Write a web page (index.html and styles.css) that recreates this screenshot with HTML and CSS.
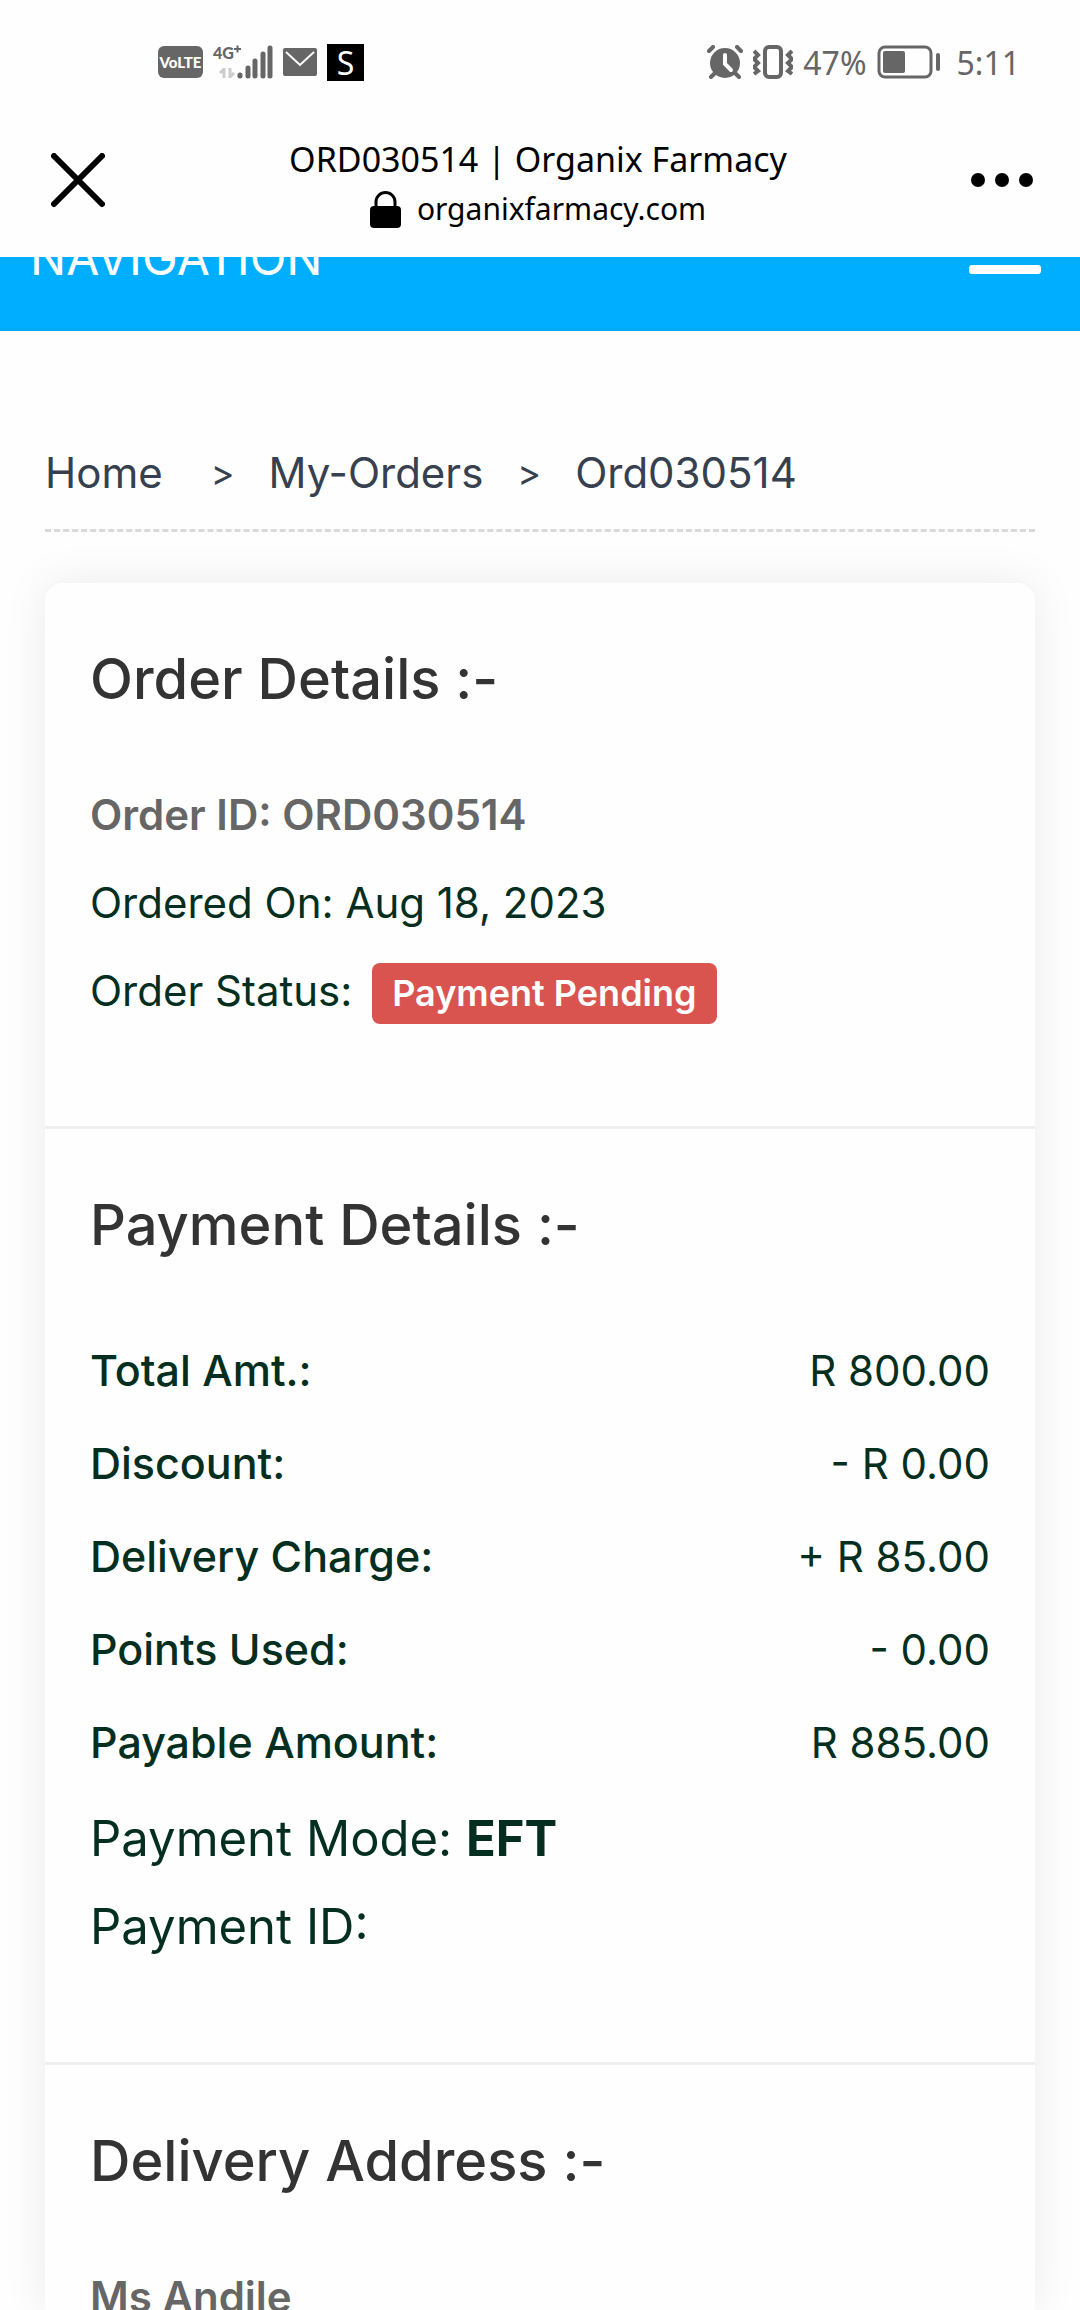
FILE: index.html
```
<!DOCTYPE html>
<html lang="en">
<head>
    <meta charset="UTF-8">
    <meta name="viewport" content="width=device-width, initial-scale=1.0">
    <title>ORD030514 | Organix Farmacy</title>
    <link rel="stylesheet" href="styles.css">
</head>
<body>
    <div class="status-bar">
        <div class="status-left">
            <span class="volte">VoLTE</span>
            <svg class="signal" width="60" height="36" viewBox="0 0 60 36">
                <text class="net" x="0" y="15">4G</text>
                <path d="M21 5h7M24.500 1.500v7" stroke="#666" stroke-width="2"/>
                <path d="M11 34V24M7 29l4-4M17 24v10M21 29l-4 4" stroke="#ccc" stroke-width="3" fill="none"/>
                <path d="M27 31v1M35 24v8M42 17v15M50 10v22M57 4v28" stroke="#666" stroke-width="5" stroke-linecap="round"/>
            </svg>
            <svg width="34" height="28" viewBox="0 0 34 28">
                <rect width="34" height="28" rx="2" fill="#666"/>
                <path d="M3 4l14 13L31 4" stroke="#fff" stroke-width="2" fill="none"/>
            </svg>
            <span class="app-badge">S</span>
        </div>
        <div class="status-right">
            <svg width="36" height="34" viewBox="0 0 36 34">
                <circle cx="18" cy="18" r="15" fill="#666"/>
                <path d="M2 6l4-4M34 6l-4-4M8 28l-4 4M28 28l4 4" stroke="#666" stroke-width="4" stroke-linecap="round"/>
                <path d="M18 10v9l6 6" stroke="#fff" stroke-width="4" stroke-linecap="round" fill="none"/>
            </svg>
            <svg width="40" height="34" viewBox="0 0 40 34">
                <rect x="12" y="2" width="16" height="30" rx="4" stroke="#666" stroke-width="4" fill="none"/>
                <path d="M1 6l4 4-4 4 4 4-4 4 4 4-4 3M39 6l-4 4 4 4-4 4 4 4-4 4 4 3" stroke="#666" stroke-width="4" fill="none"/>
            </svg>
            <span>47%</span>
            <svg width="64" height="34" viewBox="0 0 64 34">
                <rect x="2" y="2" width="52" height="30" rx="6" stroke="#666" stroke-width="3" fill="none"/>
                <rect x="6" y="6" width="22" height="22" rx="2" fill="#666"/>
                <rect x="59" y="8" width="4" height="18" rx="2" fill="#666"/>
            </svg>
            <span class="time">5:11</span>
        </div>
    </div>

    <header class="browser-bar">
        <button class="icon-btn" type="button" aria-label="Close">
            <svg width="54" height="54" viewBox="0 0 54 54">
                <path d="M3 3l48 48M51 3L3 51" stroke="#000" stroke-width="6" stroke-linecap="round"/>
            </svg>
        </button>
        <div class="page-info">
            <div>ORD030514 | Organix Farmacy</div>
            <div class="page-url">
                <svg width="31" height="37" viewBox="0 0 31 37">
                    <rect y="15" width="31" height="22" rx="4" fill="#000"/>
                    <path d="M6 17v-6a9 9 0 0 1 19 0v6" stroke="#000" stroke-width="3" fill="none"/>
                </svg>
                <span>organixfarmacy.com</span>
            </div>
        </div>
        <button class="icon-btn" type="button" aria-label="More">
            <svg width="62" height="14" viewBox="0 0 62 14">
                <circle cx="7" cy="7" r="7"/>
                <circle cx="31" cy="7" r="7"/>
                <circle cx="55" cy="7" r="7"/>
            </svg>
        </button>
    </header>

    <nav class="site-nav">
        <span class="nav-title">NAVIGATION</span>
        <button class="nav-toggle" type="button" aria-label="Toggle navigation">
            <span></span>
            <span></span>
            <span></span>
        </button>
    </nav>

    <main class="content">
        <div class="breadcrumb">
            <a href="#">Home</a>
            <span class="arrow arrow-first">&gt;</span>
            <a href="#">My-Orders</a>
            <span class="arrow">&gt;</span>
            <a href="#">Ord030514</a>
        </div>

        <div class="card">
            <section class="card-section">
                <h2>Order Details :-</h2>
                <p class="strong">Order ID: ORD030514</p>
                <p>Ordered On: Aug 18, 2023</p>
                <p>Order Status: <span class="label-danger">Payment Pending</span></p>
            </section>

            <section class="card-section">
                <h2>Payment Details :-</h2>
                <table class="amounts">
                    <tr><th scope="row">Total Amt.:</th><td>R 800.00</td></tr>
                    <tr><th scope="row">Discount:</th><td>- R 0.00</td></tr>
                    <tr><th scope="row">Delivery Charge:</th><td>+ R 85.00</td></tr>
                    <tr><th scope="row">Points Used:</th><td>- 0.00</td></tr>
                    <tr><th scope="row">Payable Amount:</th><td>R 885.00</td></tr>
                </table>
                <p class="large">Payment Mode: <b>EFT</b></p>
                <p class="large">Payment ID:</p>
            </section>

            <section class="card-section">
                <h2>Delivery Address :-</h2>
                <p class="strong">Ms Andile</p>
            </section>
        </div>
    </main>
</body>
</html>
```
FILE: styles.css
```
* {
    margin: 0;
    padding: 0;
    box-sizing: border-box;
}

body {
    font-family: Inter, "Open Sans", sans-serif;
    font-size: 42px;
    color: #042f20;
    background: #fefefe;
    height: 100vh;
    overflow: hidden;
    display: flex;
    flex-direction: column;
}

button {
    border: none;
    background: none;
}

a {
    color: inherit;
    text-decoration: none;
}

svg {
    display: block;
    flex-shrink: 0;
}

/* Phone status bar */
.status-bar {
    display: flex;
    justify-content: space-between;
    align-items: center;
    flex-shrink: 0;
    height: 121px;
    padding: 3px 60px 0 158px;
    font-family: "Noto Sans", sans-serif;
    font-size: 32px;
    color: #666;
}

.status-left,
.status-right {
    display: flex;
    align-items: center;
    gap: 10px;
}

.volte {
    width: 45px;
    line-height: 32px;
    border-radius: 6px;
    background: #666;
    color: #fff;
    font-family: Lato, sans-serif;
    font-size: 15px;
    font-weight: 900;
    text-align: center;
}

.net {
    font-family: Lato, sans-serif;
    font-size: 16px;
    font-weight: 900;
    fill: #666;
}

.app-badge {
    width: 37px;
    line-height: 37px;
    background: #000;
    color: #fff;
    text-align: center;
}

.time {
    margin-left: 6px;
}

/* In-app browser header */
.browser-bar {
    display: flex;
    justify-content: space-between;
    align-items: center;
    flex-shrink: 0;
    height: 136px;
    padding: 0 47px 18px 51px;
    font-family: "Noto Sans", sans-serif;
    font-size: 34px;
    line-height: 50px;
    color: #000;
}

.page-info {
    padding-top: 8px;
    text-align: center;
}

.page-url {
    display: flex;
    justify-content: center;
    align-items: center;
    gap: 16px;
    font-size: 30px;
}

/* Blue site navigation, scrolled partly out of view */
.site-nav {
    display: flex;
    justify-content: space-between;
    align-items: flex-end;
    flex-shrink: 0;
    height: 74px;
    padding: 0 39px 43px 30px;
    overflow: hidden;
    background: #00aeff;
    color: #fff;
}

.nav-title {
    font-size: 48px;
    line-height: 60px;
}

.nav-toggle {
    display: flex;
    flex-direction: column;
    gap: 12px;
    margin-bottom: 14px;
}

.nav-toggle span {
    width: 72px;
    height: 9px;
    border-radius: 3px;
    background: #fff;
}

/* Page content */
.content {
    flex: 1;
    display: flex;
    flex-direction: column;
    min-height: 0;
    padding: 112px 45px 0;
}

.breadcrumb {
    display: flex;
    flex-shrink: 0;
    line-height: 60px;
    padding-bottom: 26px;
    border-bottom: 3px dashed #d9d9d9;
    color: #37404e;
}

.arrow {
    margin: 0 34px;
    font-size: 36px;
}

.arrow-first {
    margin-left: 48px;
}

.card {
    flex: 1;
    min-height: 0;
    margin-top: 51px;
    border-radius: 18px 18px 0 0;
    background: #fefefe;
    box-shadow: 0 0 45px rgba(0, 0, 0, 0.08);
}

.card-section {
    padding: 56px 45px 91px;
}

.card-section + .card-section {
    border-top: 3px solid #efefef;
}

.card-section h2 {
    margin-bottom: 52px;
    font-size: 56px;
    font-weight: 500;
    line-height: 80px;
    color: #333;
}

.card-section p {
    line-height: 88px;
}

.card-section .strong {
    font-weight: 600;
    color: #666;
}

.card-section .large {
    font-size: 49px;
}

.label-danger {
    display: inline-block;
    margin-left: 8px;
    padding: 0 20px;
    border-radius: 8px;
    background: #d9534f;
    color: #fff;
    font-size: 36px;
    font-weight: 600;
    line-height: 61px;
}

.amounts {
    width: 100%;
    margin: 59px 0 6px;
    border-collapse: collapse;
    line-height: 93px;
}

.card-section h2:has(+ .amounts) {
    margin-bottom: 0;
}

.amounts th {
    font-size: 43px;
    font-weight: 500;
    text-align: left;
}

.amounts td {
    text-align: right;
}
```
